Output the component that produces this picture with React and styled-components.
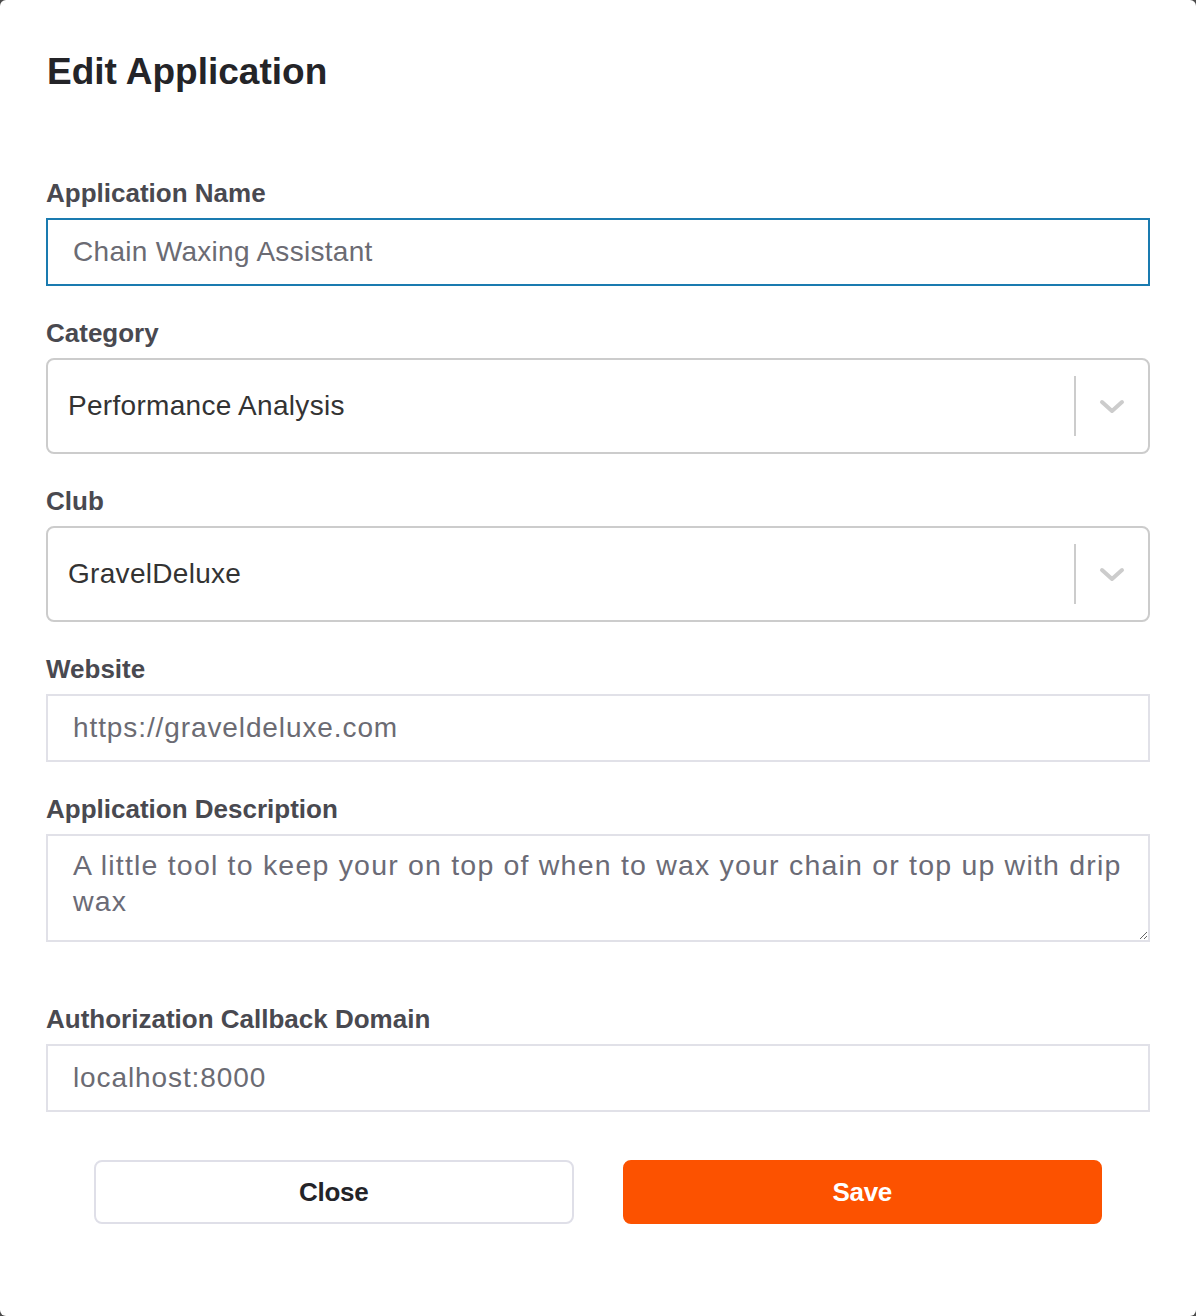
import React from 'react';
import styled, { createGlobalStyle } from 'styled-components';

const GlobalStyle = createGlobalStyle`
  html, body {
    margin: 0;
    padding: 0;
    background: #4a4a4a;
  }
  * { box-sizing: border-box; }
`;

const Modal = styled.div`
  width: 1196px;
  height: 1316px;
  background: #fff;
  border-radius: 6px;
  padding: 48px 46px 0 46px;
  font-family: "Liberation Sans", Arial, sans-serif;
`;

const Title = styled.h1`
  margin: 0 0 82px 1px;
  font-size: 37px;
  line-height: 48px;
  font-weight: 700;
  color: #242428;
`;

const Field = styled.div`
  display: flex;
  flex-direction: column;
  margin-bottom: ${p => p.$gap ?? 32}px;
`;

const Label = styled.label`
  font-size: 26px;
  line-height: 30px;
  font-weight: 700;
  color: #494950;
  margin-bottom: 10px;
`;

const TextInput = styled.input`
  width: 100%;
  height: 68px;
  border: 2px solid ${p => (p.$focused ? '#1a7bb0' : '#e1e1e8')};
  border-radius: 0;
  padding: 0 25px;
  font-family: "Liberation Sans", Arial, sans-serif;
  font-size: 28px;
  letter-spacing: ${p => (p.$focused ? 0.3 : 0.9)}px;
  color: #6b6b73;
  outline: none;
  background: #fff;
`;

const TextArea = styled.textarea`
  display: block;
  width: 100%;
  height: 108px;
  border: 2px solid #e1e1e8;
  padding: 11px 25px;
  font-family: "Liberation Sans", Arial, sans-serif;
  font-size: 28.5px;
  line-height: 36px;
  letter-spacing: 1.2px;
  color: #6b6b76;
  outline: none;
  resize: vertical;
  background: #fff;
`;

const SelectBox = styled.div`
  display: flex;
  align-items: center;
  height: 96px;
  border: 2px solid #cccccc;
  border-radius: 8px;
  background: #fff;
`;

const SelectValue = styled.div`
  flex: 1;
  padding-left: 20px;
  font-size: 28px;
  letter-spacing: 0.3px;
  color: #333;
`;

const Separator = styled.span`
  align-self: center;
  width: 2px;
  height: 60px;
  background: #cccccc;
`;

const Indicator = styled.div`
  width: 72px;
  display: flex;
  align-items: center;
  justify-content: center;
  padding-top: 2px;
`;

const Buttons = styled.div`
  display: grid;
  grid-template-columns: 1fr 1fr;
  column-gap: 49px;
  padding: 0 48px;
  margin-top: 48px;
`;

const Button = styled.button`
  height: 64px;
  border-radius: 8px;
  font-family: "Liberation Sans", Arial, sans-serif;
  font-size: 26px;
  font-weight: 700;
  letter-spacing: -0.3px;
  cursor: pointer;
  border: 2px solid ${p => (p.$primary ? '#fc5200' : '#dfdfe8')};
  background: ${p => (p.$primary ? '#fc5200' : '#fff')};
  color: ${p => (p.$primary ? '#fff' : '#242428')};
`;

const Chevron = () => (
  <svg width="26" height="16" viewBox="0 0 26 16">
    <path d="M3 3 L13 12 L23 3" fill="none" stroke="#cccccc" strokeWidth="4" strokeLinecap="round" strokeLinejoin="round" />
  </svg>
);

const Select = ({ value }) => (
  <SelectBox>
    <SelectValue>{value}</SelectValue>
    <Separator />
    <Indicator><Chevron /></Indicator>
  </SelectBox>
);

export default function App() {
  return (
    <>
      <GlobalStyle />
      <Modal>
        <Title>Edit Application</Title>
        <Field>
          <Label>Application Name</Label>
          <TextInput $focused defaultValue="Chain Waxing Assistant" />
        </Field>
        <Field>
          <Label>Category</Label>
          <Select value="Performance Analysis" />
        </Field>
        <Field>
          <Label>Club</Label>
          <Select value="GravelDeluxe" />
        </Field>
        <Field>
          <Label>Website</Label>
          <TextInput defaultValue="https://graveldeluxe.com" />
        </Field>
        <Field $gap={62}>
          <Label>Application Description</Label>
          <TextArea defaultValue="A little tool to keep your on top of when to wax your chain or top up with drip wax" />
        </Field>
        <Field $gap={0}>
          <Label>Authorization Callback Domain</Label>
          <TextInput defaultValue="localhost:8000" />
        </Field>
        <Buttons>
          <Button>Close</Button>
          <Button $primary>Save</Button>
        </Buttons>
      </Modal>
    </>
  );
}
